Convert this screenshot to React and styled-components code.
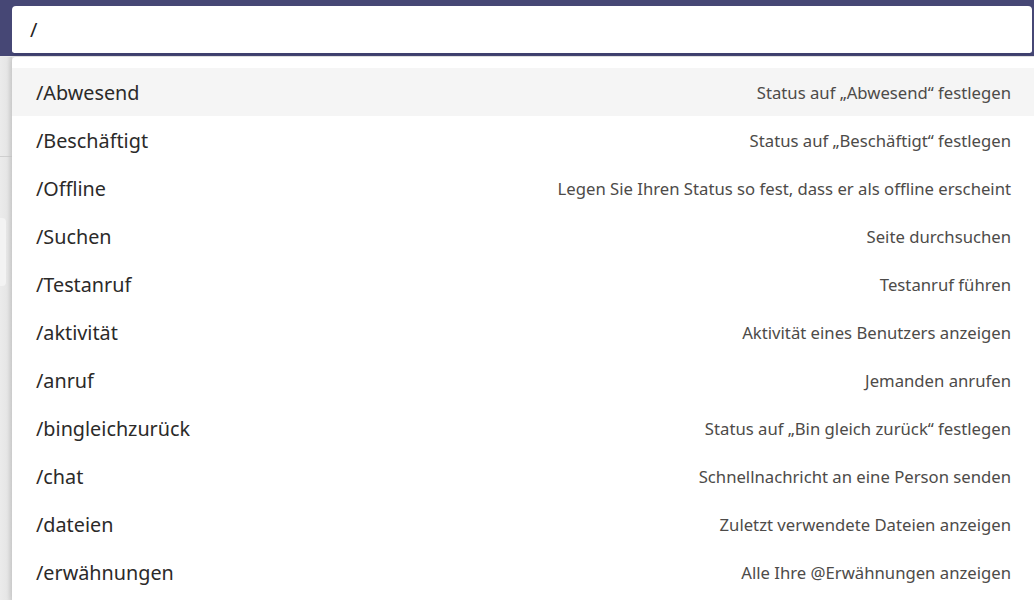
import React from "react";
import styled, { createGlobalStyle } from "styled-components";

const Global = createGlobalStyle`
  html, body { margin: 0; padding: 0; }
  body {
    width: 1034px; height: 600px; overflow: hidden;
    font-family: "Noto Sans", "Open Sans", "DejaVu Sans", sans-serif;
    background: #ebebeb;
  }
`;

const Page = styled.div`
  width: 1034px;
  height: 600px;
  display: flex;
  flex-direction: column;
  overflow: hidden;
`;

const Header = styled.div`
  height: 56px;
  background: #464775;
  padding: 6px 0 0 12px;
  box-sizing: border-box;
  flex-shrink: 0;
`;

const SearchBox = styled.div`
  width: 1020px;
  height: 49px;
  background: #fff;
  border-radius: 4px;
  border-bottom: 2px solid #3f4070;
  box-sizing: border-box;
  display: flex;
  align-items: center;
  padding-left: 18px;
  font-size: 20px;
  color: #252423;
`;

const Body = styled.div`
  flex: 1;
  display: flex;
  padding-top: 1px;
  min-height: 0;
`;

const Rail = styled.div`
  width: 12px;
  flex-shrink: 0;
  background: linear-gradient(to right, #ebebeb 0, #e6e6e6 7px, #d6d6d6 12px);
  display: flex;
  flex-direction: column;
`;

const RailTop = styled.div`
  height: 99px;
  border-bottom: 1px solid #cfcfcf;
  flex-shrink: 0;
`;

const RailCard = styled.div`
  margin-top: 61px;
  width: 6px;
  height: 68px;
  background: #f3f3f3;
  border-radius: 0 4px 4px 0;
`;

const Dropdown = styled.div`
  flex: 1;
  background: #fff;
  border-radius: 4px 0 0 0;
  padding-top: 11px;
  box-shadow: 0 0 6px rgba(0, 0, 0, 0.12);
`;

const Item = styled.div`
  height: 48px;
  display: flex;
  align-items: center;
  justify-content: space-between;
  padding: 1px 23px 0 24px;
  box-sizing: border-box;
  background: ${(p) => (p.$active ? "#f5f5f5" : "transparent")};
`;

const Command = styled.span`
  font-size: 19.8px;
  color: #2b2a29;
`;

const Desc = styled.span`
  font-size: 16.7px;
  color: #4d4b49;
`;

const items = [
  ["/Abwesend", "Status auf „Abwesend“ festlegen"],
  ["/Beschäftigt", "Status auf „Beschäftigt“ festlegen"],
  ["/Offline", "Legen Sie Ihren Status so fest, dass er als offline erscheint"],
  ["/Suchen", "Seite durchsuchen"],
  ["/Testanruf", "Testanruf führen"],
  ["/aktivität", "Aktivität eines Benutzers anzeigen"],
  ["/anruf", "Jemanden anrufen"],
  ["/bingleichzurück", "Status auf „Bin gleich zurück“ festlegen"],
  ["/chat", "Schnellnachricht an eine Person senden"],
  ["/dateien", "Zuletzt verwendete Dateien anzeigen"],
  ["/erwähnungen", "Alle Ihre @Erwähnungen anzeigen"],
];

export default function App() {
  return (
    <Page>
      <Global />
      <Header>
        <SearchBox>/</SearchBox>
      </Header>
      <Body>
        <Rail>
          <RailTop />
          <RailCard />
        </Rail>
        <Dropdown>
          {items.map(([c, d], i) => (
            <Item key={c} $active={i === 0}>
              <Command>{c}</Command>
              <Desc>{d}</Desc>
            </Item>
          ))}
        </Dropdown>
      </Body>
    </Page>
  );
}
